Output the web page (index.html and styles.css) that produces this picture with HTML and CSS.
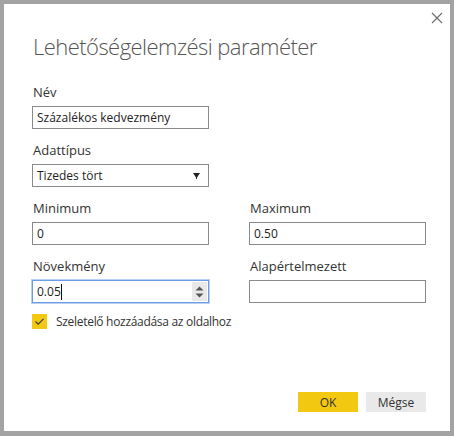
FILE: index.html
```html
<!DOCTYPE html>
<html lang="hu">
<head>
<meta charset="utf-8">
<title>Lehetőségelemzési paraméter</title>
<link rel="stylesheet" href="styles.css">
</head>
<body>
<div class="dialog">
  <button class="close" aria-label="Bezárás">
    <svg width="12" height="12" viewBox="0 0 12 12"><path d="M1 1L11 11M11 1L1 11" stroke="#6b6b6b" stroke-width="1.1" fill="none"/></svg>
  </button>
  <h1 class="title">Lehetőségelemzési paraméter</h1>
  <div class="form">
    <div class="field">
      <label class="label">Név</label>
      <div class="input">Százalékos kedvezmény</div>
    </div>
    <div class="field">
      <label class="label">Adattípus</label>
      <div class="input select">Tizedes tört
        <svg class="arrow" width="7" height="6" viewBox="0 0 7 6"><path d="M0 0H7L4 4.5V6H3V4.5Z" fill="#222"/></svg>
      </div>
    </div>
    <div class="grid">
      <div class="field">
        <label class="label">Minimum</label>
        <div class="input">0</div>
      </div>
      <div class="field">
        <label class="label">Maximum</label>
        <div class="input">0.50</div>
      </div>
      <div class="field">
        <label class="label">Növekmény</label>
        <div class="input focused"><span>0.05</span><span class="caret"></span>
          <div class="spin">
            <svg width="9" height="12" viewBox="0 0 9 12"><path d="M4.5 0.5L8.5 4.5H0.5Z M4.5 11.5L8.5 7.5H0.5Z" fill="#555"/></svg>
          </div>
        </div>
      </div>
      <div class="field">
        <label class="label">Alapértelmezett</label>
        <div class="input"></div>
      </div>
    </div>
    <div class="check-row">
      <span class="checkbox">
        <svg width="15" height="15" viewBox="0 0 15 15"><path d="M3.5 7.5L6.2 10.2L11.5 4.8" stroke="#3c3c3c" stroke-width="1.2" fill="none"/></svg>
      </span>
      <span class="check-label">Szeletelő hozzáadása az oldalhoz</span>
    </div>
  </div>
  <div class="buttons">
    <button class="btn ok">OK</button>
    <button class="btn cancel">Mégse</button>
  </div>
</div>
</body>
</html>
```
FILE: styles.css
```css
html, body {
  margin: 0;
  padding: 0;
}
body {
  background: #a3a3a3;
  width: 454px;
  height: 436px;
  padding: 4px 4px 5px 4px;
  box-sizing: border-box;
  font-family: "Open Sans", "Noto Sans", sans-serif;
  color: #333;
}
.dialog {
  position: relative;
  background: #fff;
  height: 427px;
  display: flex;
  flex-direction: column;
  box-sizing: border-box;
  padding: 0 24px 0 28px;
}
.close {
  position: absolute;
  top: 7px;
  right: 6px;
  width: 14px;
  height: 14px;
  padding: 0;
  border: 0;
  background: none;
  display: flex;
  align-items: center;
  justify-content: center;
}
.title {
  margin: 26px 0 0 1px;
  font-size: 22px;
  font-weight: 300;
  line-height: 32px;
  color: #555;
  letter-spacing: -0.55px;
}
.form {
  margin-top: 22px;
  display: flex;
  flex-direction: column;
  gap: 13px;
}
.field {
  display: flex;
  flex-direction: column;
  gap: 6px;
}
.label {
  font-size: 13px;
  line-height: 16px;
  color: #333;
  padding-left: 1px;
}
.input {
  position: relative;
  width: 177px;
  height: 23px;
  box-sizing: border-box;
  border: 1px solid #8a8a8a;
  font-size: 12px;
  line-height: 21px;
  padding: 0 4px;
  color: #222;
  display: flex;
  align-items: center;
}
.select .arrow {
  position: absolute;
  right: 8px;
  top: 8px;
}
.grid {
  display: grid;
  grid-template-columns: 177px 177px;
  column-gap: 40px;
  row-gap: 13px;
}
.focused {
  border-color: #6b9be0;
  box-shadow: 0 0 0 1px #b9d0f2;
}
.caret {
  display: inline-block;
  width: 1px;
  height: 16px;
  background: #111;
  margin-left: 0;
}
.spin {
  position: absolute;
  right: 1px;
  top: 1px;
  bottom: 1px;
  width: 15px;
  background: #e9e9e9;
  display: flex;
  align-items: center;
  justify-content: center;
}
.check-row {
  margin-top: -3px;
  display: flex;
  align-items: center;
  gap: 9px;
}
.checkbox {
  width: 15px;
  height: 15px;
  background: #f2c811;
  display: flex;
}
.check-label {
  font-size: 12px;
  letter-spacing: -0.3px;
  color: #333;
}
.buttons {
  margin-top: auto;
  margin-bottom: 19px;
  display: flex;
  justify-content: flex-end;
  gap: 8px;
}
.btn {
  width: 60px;
  height: 20px;
  border: 0;
  padding: 0;
  font-family: inherit;
  font-size: 12px;
  color: #333;
}
.ok {
  background: #f2c811;
}
.cancel {
  background: #e9e9e9;
}
```
